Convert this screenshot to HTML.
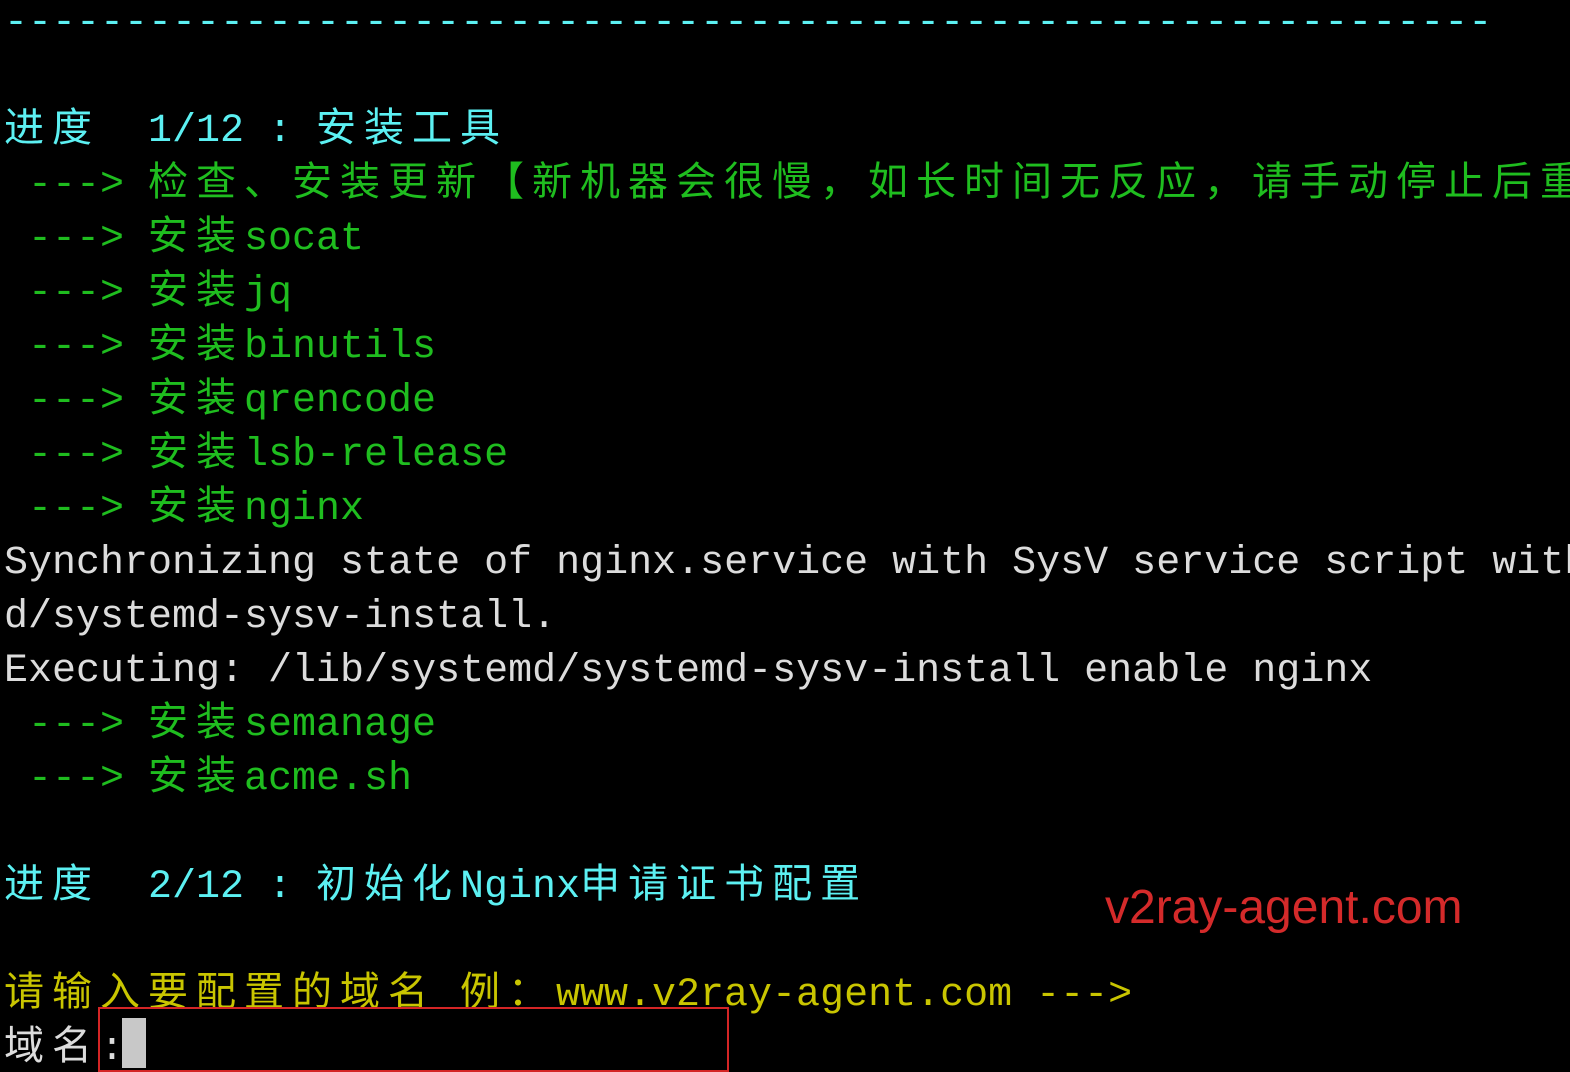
<!DOCTYPE html><html><head><meta charset="utf-8"><style>
html,body{margin:0;background:#000;width:1570px;height:1072px;overflow:hidden;position:relative}
.l{position:absolute;left:4px;right:0;overflow:hidden;white-space:pre;font-family:"Liberation Mono","Noto Sans CJK SC",monospace;font-size:40px;line-height:54px;height:54px}
.c{letter-spacing:8px}
.cy{color:#5cf0f2}.g{color:#1fbd1f}.w{color:#dcdcdc}.y{color:#c9c500}
</style></head><body>
<div class="l cy" style="top:-3px">--------------------------------------------------------------</div>
<div class="l cy" style="top:105px"><span class="c">进度</span>  1/12 : <span class="c">安装工具</span></div>
<div class="l g" style="top:159px"> ---> <span class="c">检查、安装更新【新机器会很慢，如长时间无反应，请手动停止后重新执行】</span></div>
<div class="l g" style="top:213px"> ---> <span class="c">安装</span>socat</div>
<div class="l g" style="top:267px"> ---> <span class="c">安装</span>jq</div>
<div class="l g" style="top:321px"> ---> <span class="c">安装</span>binutils</div>
<div class="l g" style="top:375px"> ---> <span class="c">安装</span>qrencode</div>
<div class="l g" style="top:429px"> ---> <span class="c">安装</span>lsb-release</div>
<div class="l g" style="top:483px"> ---> <span class="c">安装</span>nginx</div>
<div class="l w" style="top:537px">Synchronizing state of nginx.service with SysV service script with /lib/systemd/systemd-sysv-install.</div>
<div class="l w" style="top:591px">d/systemd-sysv-install.</div>
<div class="l w" style="top:645px">Executing: /lib/systemd/systemd-sysv-install enable nginx</div>
<div class="l g" style="top:699px"> ---> <span class="c">安装</span>semanage</div>
<div class="l g" style="top:753px"> ---> <span class="c">安装</span>acme.sh</div>
<div class="l cy" style="top:861px"><span class="c">进度</span>  2/12 : <span class="c">初始化</span>Nginx<span class="c">申请证书配置</span></div>
<div class="l y" style="top:969px"><span class="c">请输入要配置的域名</span> <span class="c">例：</span>www.v2ray-agent.com ---></div>
<div class="l w" style="top:1023px"><span class="c">域名</span>:</div>
<div style="position:absolute;left:122px;top:1018px;width:24px;height:50px;background:#c8c8c8"></div>
<div style="position:absolute;left:98px;top:1007px;width:627px;height:61px;border:2px solid #d42525"></div>
<div style="position:absolute;left:1105px;top:880px;font-family:'Liberation Sans',sans-serif;font-size:48px;color:#d42a2a;white-space:nowrap">v2ray-agent.com</div>
</body></html>
